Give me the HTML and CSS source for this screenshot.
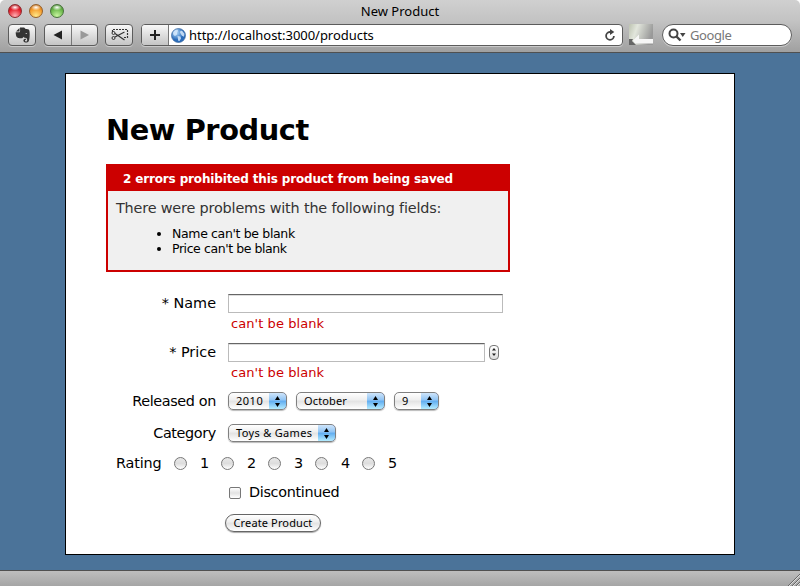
FILE: index.html
```html
<!DOCTYPE html>
<html lang="en">
<head>
<meta charset="utf-8">
<title>New Product</title>
<link rel="stylesheet" href="styles.css">
</head>
<body>
<div class="window">
  <header class="chrome">
    <div class="titlebar">
      <div class="lights"><i class="light red"></i><i class="light amber"></i><i class="light green"></i></div>
      <div class="title">New Product</div>
    </div>
    <div class="toolbar">
      <div class="tool evernote"><svg width="26" height="20" viewBox="0 0 26 20"><path d="M7 6.500 10.500 3v3.500z" fill="#333"/><path d="M11 2.500h3.500c1 0 1.500.6 1.600 1.300l2.800.5c1.200.2 1.600 1.200 1.700 2.600.3 3 0 7-.8 9.200-.3.900-1 1.400-2 1.400h-1.400c-1.300 0-2-.8-2-1.900 0-1.300.8-1.900 2.500-1.900v1.400c-.6 0-1 .1-1 .6s.4.7 1 .7c1 0 1.300-.5 1.300-1.500 0-1.500-.8-2-2.200-2.100-.9-.1-1.500-.4-1.800-1-.2 1-.8 1.500-1.700 1.500-2.500 0-4.200-.3-4.800-1.300C7 10.800 6.700 9 6.700 7.200h3c1 0 1.400-.4 1.400-1.300z" fill="#333"/><path d="M16.400 8.700c.2-.9 1.600-.9 1.800.2z" fill="#ddd"/></svg></div>
      <div class="tool nav"><span><svg width="26" height="20"><path d="M8.500 10 17 5.500v9z" fill="#222"/></svg></span><span><svg width="26" height="20"><path d="M17 10 8.500 5.500v9z" fill="#999"/></svg></span></div>
      <div class="tool clip"><svg width="26" height="20" viewBox="0 0 26 20" fill="none" stroke="#333"><path d="M6.500 7V4.500h15v8H17" stroke-dasharray="2 1" stroke-width="1.200"/><path d="M9 12 18.500 7M9 8.500l9.500 6.500" stroke-width="1.200"/><circle cx="7.500" cy="8" r="1.500"/><circle cx="7.500" cy="13" r="1.500"/></svg></div>
      <div class="address">
        <div class="add"><svg width="26" height="20"><path d="M13 5v10M8 10h10" stroke="#222" stroke-width="2"/></svg></div>
        <svg class="globe" width="15" height="15" viewBox="0 0 15 15"><defs><radialGradient id="g" cx=".35" cy=".3"><stop offset="0" stop-color="#b5dcfb"/><stop offset="1" stop-color="#2a6cba"/></radialGradient></defs><circle cx="7.500" cy="7.500" r="7" fill="url(#g)" stroke="#3d699d" stroke-width=".7"/><path d="M2 5c.5-2 2.500-3.500 4.500-3.500L7 3 6 4.500 6 6.500 4 8 2.500 7zM9.500 3l1.500-.3 2.500 3-.5 3-2-1-1-1.500-1-2zM6.500 8l3 .6.5 2L8.500 13l-1.300-.3z" fill="#d6e9fb" opacity=".85"/></svg>
        <span class="url">http://localhost:3000/products</span>
        <svg class="reload" width="12" height="14" viewBox="0 0 12 14"><path d="M7.500 4H5.800A3.900 3.900 0 1 0 9.900 8" fill="none" stroke="#444" stroke-width="1.800"/><path d="M6 1v6l4.300-3z" fill="#444"/></svg>
      </div>
      <svg class="thumb" width="24" height="21" viewBox="0 0 24 21"><defs><linearGradient id="t" x2="1" y2=".3"><stop offset="0" stop-color="#bcc2b0"/><stop offset=".35" stop-color="#e2e6dc"/><stop offset="1" stop-color="#999"/></linearGradient></defs><path d="M0 0h24v21H0z" fill="url(#t)"/><path d="M4 16.500 10 10.500v4.500h14v4.500H6z" fill="#f6f6f6"/><path d="M0 15h4l-1 2 4 4H0z" fill="#666"/></svg>
      <div class="search"><svg width="20" height="14" viewBox="0 0 20 14"><circle cx="5.500" cy="5.500" r="4" fill="none" stroke="#444" stroke-width="2"/><path d="m8.500 8.500 4 4" stroke="#444" stroke-width="2.400"/><path d="M12 5h5.500l-2.750 4z" fill="#444"/></svg><span>Google</span></div>
    </div>
  </header>
  <main class="page">
    <section class="card">
      <h1>New Product</h1>
      <div class="errors">
        <h2>2 errors prohibited this product from being saved</h2>
        <p>There were problems with the following fields:</p>
        <ul><li><span class="li-name">Name can't be blank</span></li><li><span class="li-price">Price can't be blank</span></li></ul>
      </div>
      <form>
        <div class="row name"><label>* Name</label><div><div class="field"></div><div class="error">can't be blank</div></div></div>
        <div class="row price"><label>* Price</label><div><div class="with-step"><div class="field short"></div><div class="stepper"><svg width="8" height="13"><path d="M2 5.500 4 3l2 2.500zM2 8.500 4 11l2-2.500z" fill="#222"/></svg></div></div><div class="error">can't be blank</div></div></div>
        <div class="row released"><label>Released on</label>
          <div class="selects">
            <div class="select year"><span>2010</span><b><svg width="18" height="17"><path d="M6 7 8.500 3 11 7zM6 10l2.500 4 2.500-4z"/></svg></b></div>
            <div class="select month"><span>October</span><b><svg width="18" height="17"><path d="M6 7 8.500 3 11 7zM6 10l2.500 4 2.500-4z"/></svg></b></div>
            <div class="select day"><span>9</span><b><svg width="18" height="17"><path d="M6 7 8.500 3 11 7zM6 10l2.500 4 2.500-4z"/></svg></b></div>
          </div></div>
        <div class="row category"><label>Category</label><div class="select cat"><span>Toys &amp; Games</span><b><svg width="18" height="17"><path d="M6 7 8.500 3 11 7zM6 10l2.500 4 2.500-4z"/></svg></b></div></div>
        <div class="rating"><span class="caption">Rating</span><div class="opt"><i></i>1</div><div class="opt"><i></i>2</div><div class="opt"><i></i>3</div><div class="opt"><i></i>4</div><div class="opt"><i></i>5</div></div>
        <div class="discontinued"><i></i><span>Discontinued</span></div>
        <div class="button"><span>Create Product</span></div>
      </form>
    </section>
  </main>
  <footer class="status"><svg width="14" height="15"><path d="M2 15 14 3M6 15l8-8M10 15l4-4" stroke="#666"/><path d="M3 15 14 4M7 15l7-7M11 15l3-3" stroke="#ddd"/></svg></footer>
</div>
</body>
</html>
```
FILE: styles.css
```css
* { box-sizing: border-box; }
body { margin: 0; font-family: "DejaVu Sans", sans-serif; color: #000; }
svg { display: block; flex: none; }
i { display: block; flex: none; }
span, label { white-space: nowrap; }
.window { width: 800px; height: 586px; display: flex; flex-direction: column; overflow: hidden; background: #fff; }
.chrome { height: 53px; background: linear-gradient(#d0d0d0, #c3c3c3 40%, #a0a0a0); border-bottom: 1px solid #505050; border-radius: 5px 5px 0 0; }
.titlebar { height: 24px; display: grid; grid-template-columns: 80px 1fr 80px; }
.lights { display: flex; gap: 7px; padding: 4px 0 0 8px; }
.light { width: 14px; height: 14px; border-radius: 50%; border: 1px solid #777; }
.red { background: radial-gradient(ellipse 5px 3px at 50% 20%, #fff, transparent), radial-gradient(circle at 50% 90%, #ffb0b5, #e51b27 60%, #a01018); border-color: #8c2a2e; }
.amber { background: radial-gradient(ellipse 5px 3px at 50% 20%, #fff, transparent), radial-gradient(circle at 50% 90%, #ffe98a, #f49a2a 60%, #b05a10); border-color: #94602a; }
.green { background: radial-gradient(ellipse 5px 3px at 50% 20%, #fff, transparent), radial-gradient(circle at 50% 90%, #c8f5a0, #68b548 60%, #3a7a24); border-color: #47713a; }
.title { font: 13px/22px "Noto Sans", sans-serif; text-align: center; }
.toolbar { display: flex; height: 22px; padding-left: 8px; }
.tool { height: 22px; border: 1px solid #5c5c5c; border-radius: 4px; background: linear-gradient(#f8f8f8, #c5c5c5); box-shadow: 0 1px 0 #cacaca; display: flex; overflow: hidden; }
.evernote { width: 28px; }
.nav { width: 54px; margin-left: 8px; }
.nav span + span { border-left: 1px solid #777; }
.clip { width: 28px; margin-left: 7px; }
.address { width: 482px; height: 22px; margin-left: 8px; display: flex; align-items: center; border: 1px solid #5c5c5c; border-radius: 4px; background: #fff; overflow: hidden; box-shadow: 0 1px 0 #cacaca; }
.add { width: 27px; height: 20px; border-right: 1px solid #777; background: linear-gradient(#f8f8f8, #c5c5c5); }
.globe { margin-left: 2px; }
.url { margin-left: 3px; font: 13px/20px "Noto Sans", sans-serif; letter-spacing: -0.030px; flex: 1; }
.reload { margin-right: 6px; }
.thumb { margin: 0 0 0 6px; }
.search { width: 130px; margin-left: 9px; height: 22px; border: 1px solid #5c5c5c; border-radius: 11px; background: #fff; display: flex; align-items: center; padding-left: 5px; font: 13px/20px "Noto Sans", sans-serif; letter-spacing: -0.400px; color: #777; box-shadow: 0 1px 0 #cacaca; }
.search span { margin-left: 2px; }
.page { flex: 1; background: #4b7399; padding: 20px 65px 15px; }
.card { height: 482px; background: #fff; border: 1px solid #000; padding: 40px; }
h1 { margin: 0; height: 50px; font-size: 28.800px; line-height: 32px; letter-spacing: -0.400px; white-space: nowrap; }
.errors { width: 404px; height: 108px; border: 2px solid #c00; background: #f0f0f0; }
h2 { margin: 0; height: 25px; padding-left: 15px; font-size: 12px; line-height: 27px; letter-spacing: -0.150px; color: #fff; background: #c00; white-space: nowrap; }
.errors p { margin: 7px 0 0 8px; font-size: 14.400px; line-height: 20px; letter-spacing: -0.170px; color: #333; white-space: nowrap; }
.errors ul { margin: 8px 0 0; padding-left: 64px; font-size: 12.500px; line-height: 15px; }
.li-name { letter-spacing: -0.350px; }
.li-price { letter-spacing: -0.420px; }
form { padding-top: 22px; font-size: 14.400px; }
.row { display: grid; grid-template-columns: 110px 1fr; column-gap: 12px; line-height: 18px; }
.row label { text-align: right; }
.released label, .category label { letter-spacing: -0.370px; }
.name, .price { height: 49px; }
.field { width: 275px; height: 19px; border: 1px solid #bbb; border-top-color: #666; box-shadow: inset 0 1px #ddd; }
.short { width: 257px; }
.with-step { display: flex; gap: 4px; align-items: center; }
.stepper { width: 10px; height: 15px; border: 1px solid #777; border-radius: 4px; background: linear-gradient(#fff, #ddd); }
.stepper svg { margin-top: -1px; }
.error { margin: 2px 0 0 3px; font-size: 13px; line-height: 18px; letter-spacing: 0.070px; color: #c00; }
.selects { display: flex; gap: 9px; }
.released { height: 32px; }
.category { height: 29px; }
.select { height: 18px; border: 1px solid #808080; border-radius: 5px; display: flex; justify-content: space-between; overflow: hidden; background: linear-gradient(#fff, #eee 45%, #e2e2e2 50%, #fff); font: 11px/16px "Noto Sans", sans-serif; letter-spacing: 0.150px; box-shadow: 0 1px 1px #bbb; }
.select span { padding-left: 7px; }
.select b { width: 18px; margin: -1px -1px -1px 0; background: linear-gradient(#cfe5fa, #8ec3f4 45%, #60acf0 50%, #b4ecff); border: 1px solid #4561a8; border-left: 0; border-radius: 0 5px 5px 0; }
.year { width: 59px; } .month { width: 89px; } .day { width: 45px; } .cat { width: 108px; letter-spacing: 0.330px; }
.year { letter-spacing: 0.500px; }
.rating { display: flex; height: 30px; padding-left: 10px; line-height: 20px; }
.caption { width: 58px; letter-spacing: -0.150px; }
.opt { display: flex; width: 47px; gap: 13px; }
.opt i { width: 13px; height: 13px; margin-top: 4px; border: 1px solid #777; border-radius: 50%; background: linear-gradient(#e8e8e8, #ddd 50%, #fff); }
.discontinued { display: flex; padding-left: 123px; gap: 8px; height: 29px; line-height: 18px; letter-spacing: -0.330px; }
.discontinued i { width: 12px; height: 12px; margin-top: 4px; border: 1px solid #777; border-radius: 2px; background: linear-gradient(#fff, #e2e2e2 50%, #fff); }
.button { width: 96px; height: 18px; margin: 2px 0 0 119px; border: 1px solid #666; border-radius: 9px; background: linear-gradient(#fff, #eee 45%, #e2e2e2 50%, #fff); font: 11px/16px "Noto Sans", sans-serif; letter-spacing: 0.130px; text-align: center; box-shadow: 0 1px 1px #aaa; }
.status { height: 16px; background: linear-gradient(#bebebe, #a5a5a5); border-top: 1px solid #505050; display: flex; justify-content: flex-end; }
```
